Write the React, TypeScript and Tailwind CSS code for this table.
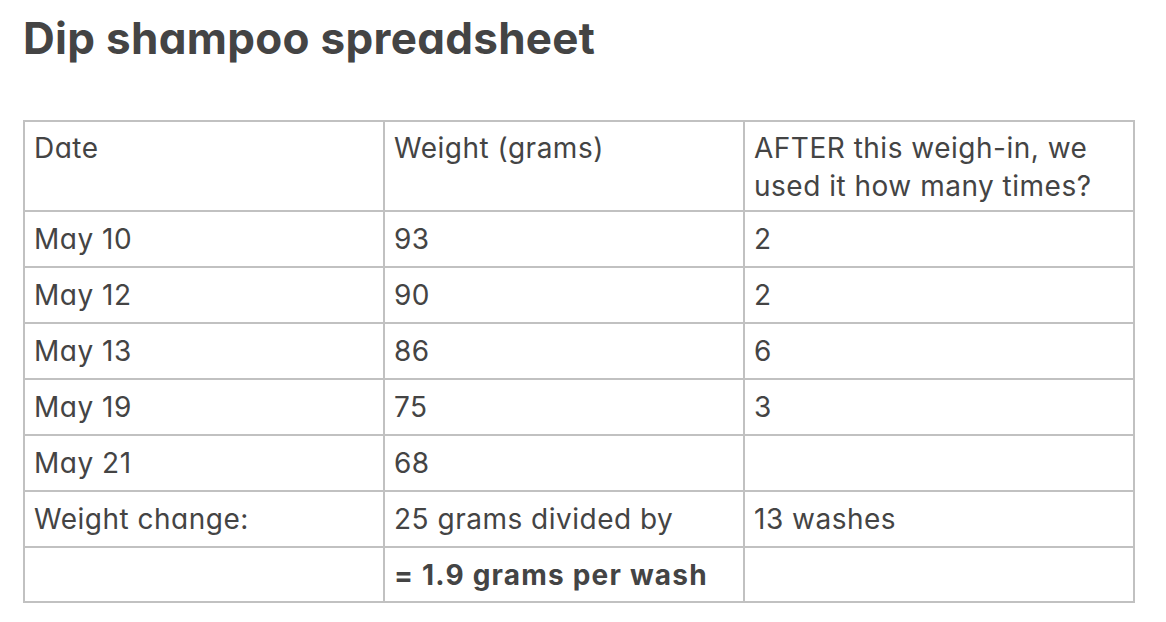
const rows: [string, string, string][] = [
  ['May 10', '93', '2'],
  ['May 12', '90', '2'],
  ['May 13', '86', '6'],
  ['May 19', '75', '3'],
  ['May 21', '68', ''],
  ['Weight change:', '25 grams divided by', '13 washes'],
];

const cell = 'border-2 border-[#c1c1c1] px-[9px] align-top text-left';
const head = `${cell} pt-[7px] pb-[5px] font-normal`;
const body = `${cell} py-2`;
const firstCol = "[font-feature-settings:'cv11']";

export default function App() {
  return (
    <div className="min-h-screen bg-white px-[23px] pt-[12px] font-['Inter',sans-serif] text-[#444444]">
      <h1 className={`text-[44px] font-bold leading-[52px] tracking-[0.3px] ${firstCol}`}>
        Dip shampoo spreadsheet
      </h1>
      <table className="mt-[56px] w-[1110px] table-fixed border-collapse text-[28px] leading-[38px] tracking-[0.5px]">
        <colgroup>
          <col className="w-[360px]" />
          <col className="w-[360px]" />
          <col className="w-[390px]" />
        </colgroup>
        <thead>
          <tr>
            <th className={`${head} ${firstCol}`}>Date</th>
            <th className={head}>Weight (grams)</th>
            <th className={head}>AFTER this weigh-in, we used it how many times?</th>
          </tr>
        </thead>
        <tbody>
          {rows.map(([date, weight, uses]) => (
            <tr key={date}>
              <td className={`${body} ${firstCol}`}>{date}</td>
              <td className={body}>{weight}</td>
              <td className={body}>{uses}</td>
            </tr>
          ))}
          <tr>
            <td className={body}></td>
            <td className={`${cell} pt-2 pb-[7px] font-bold tracking-[1.2px]`}>= 1.9 grams per wash</td>
            <td className={body}></td>
          </tr>
        </tbody>
      </table>
    </div>
  );
}
